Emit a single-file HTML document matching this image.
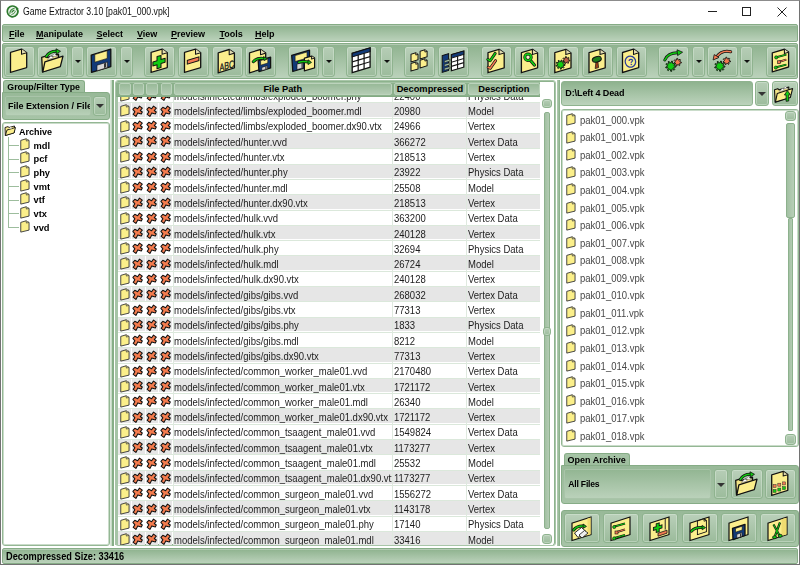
<!DOCTYPE html><html><head><meta charset="utf-8"><title>Game Extractor</title><style>
*{margin:0;padding:0;box-sizing:border-box}
html,body{width:800px;height:565px;overflow:hidden;background:#fff;font-family:"Liberation Sans",sans-serif;color:#000}
.a{position:absolute}
.pnl{position:absolute;border:1px solid #86ac86;border-radius:3px;background:linear-gradient(#8fb38f,#bdd4bd)}
.bar{position:absolute;border:1px solid #86ac86;border-radius:2px;background:linear-gradient(#8eb28e,#bbd2bb);box-shadow:inset 0 1px 0 #b3cbb3}
.btn{position:absolute;border:1px solid #8fb38f;border-radius:3px;background:linear-gradient(#bad0ba,#9bbb9b);box-shadow:inset 0 0 0 1px rgba(220,235,220,.45)}
.dd{position:absolute;border:1px solid #8fb38f;border-radius:3px;background:linear-gradient(#b6cdb6,#9cbc9c);box-shadow:inset 0 0 0 1px rgba(220,235,220,.45)}
.arr{position:absolute;width:0;height:0;border-left:3px solid transparent;border-right:3px solid transparent;border-top:3px solid #111}
.b{font-weight:bold}
.t{position:absolute;white-space:nowrap;font-size:9px;line-height:11px;filter:grayscale(1)}
.mi{position:absolute;font-weight:bold;font-size:9px;line-height:11px;white-space:nowrap;filter:grayscale(1)}
.mi u{text-decoration:underline;text-underline-offset:1px}
svg.i{position:absolute;overflow:visible}
.row{position:absolute;left:0;width:423px;height:15.29px}
.tt{position:absolute;white-space:nowrap;font-size:10.4px;line-height:12px;color:#1c1c1c;transform:scaleX(.915);transform-origin:0 0;filter:grayscale(1)}
.g{background:#e6e6e6}
</style></head><body>
<svg width="0" height="0" style="position:absolute">
<defs>
<symbol id="page" viewBox="0 0 20 26"><path d="M1.5,4.6 L12.4,1.3 L17.6,4.6 L17.6,19.3 L1.5,24.6 Z" fill="#fbee8c" stroke="#111" stroke-width="1.4" stroke-linejoin="round"/><path d="M12.4,1.3 L12.8,6.2 L17.6,4.6" fill="#ddd7a0" stroke="#111" stroke-width="1.1" stroke-linejoin="round"/></symbol>
<symbol id="spage" viewBox="0 -1 10 13"><path d="M0.75,1.4 L6.1,-0.2 L9.05,1.4 L9.05,9.1 L0.75,11.1 Z" fill="#fbef8a" stroke="#2a2a2a" stroke-width="0.85" stroke-linejoin="round"/><path d="M6.1,-0.2 L6.4,2.1 L9.05,1.4" fill="#d8d2a0" stroke="#2a2a2a" stroke-width="0.6"/></symbol>
<symbol id="xo" viewBox="-0.5 -0.5 11.5 12.5"><path d="M7,0.6 L9.8,2.7 L7.8,5 L9.8,6.5 L8.8,8.4 L5.3,7.4 L3.4,10.9 L0.7,8.9 L2.4,6.3 L0.4,3.8 L2.3,1.8 L5.1,3.2 Z" fill="#f47c4e" stroke="#111" stroke-width="1.05" stroke-linejoin="round"/></symbol>
<symbol id="ofold" viewBox="0 0 26 26"><path d="M4,11 L9,9.5 L10,11 L21,7.8 L21,20 L4.5,26 Z" fill="#f4e68a" stroke="#111" stroke-width="1.3" stroke-linejoin="round"/><path d="M9.5,13 L14,9.5 L17,12.5 Z M13,9 L16,7.6 L19,10 Z" fill="#fff" stroke="#555" stroke-width="0.6"/><path d="M7,16 L25,10 L22,21 L4.8,26 Z" fill="#fbee8c" stroke="#111" stroke-width="1.3" stroke-linejoin="round"/><path d="M8.5,9.5 Q12,4 19,5.5" fill="none" stroke="#111" stroke-width="2.6"/><path d="M8.5,9.5 Q12,4 19,5.5" fill="none" stroke="#11aa11" stroke-width="1.6"/><path d="M17.5,2.8 L22.5,5.3 L18,8 Z" fill="#11aa11" stroke="#111" stroke-width="0.8"/></symbol>
<symbol id="sfold" viewBox="0 0 12 11"><path d="M1,2.5 L4,1.6 L5,2.5 L10.5,1 L10.5,7.5 L1.3,10.5 Z" fill="#f4e68a" stroke="#111" stroke-width="0.9" stroke-linejoin="round"/><path d="M3,5 L11.5,2.5 L10,8 L1.3,10.5 Z" fill="#fbee8c" stroke="#111" stroke-width="0.9" stroke-linejoin="round"/><path d="M4.5,3.5 L7,2 L8,3.5 Z" fill="#fff"/></symbol>
<symbol id="floppy" viewBox="0 0 24 26"><path d="M2,8 L20,2 L21,21 L3,25 Z" fill="#1f4a8c" stroke="#111" stroke-width="1.3" stroke-linejoin="round"/><path d="M4.8,7.6 L16,4 L16,10.5 L4.8,14 Z" fill="#fbee8c" stroke="#111" stroke-width="0.7"/><path d="M7,17 L16,14.4 L16,20.5 L7,23 Z" fill="#c8c8c8" stroke="#111" stroke-width="0.7"/><path d="M13,15.5 L14.5,15 L14.5,20 L13,20.4 Z" fill="#333"/></symbol>
</defs></svg>
<div class="a" style="left:0;top:0;width:800px;height:565px;border:1px solid #727272;border-top-color:#8c8c8c"></div>
<svg class="i" style="left:6px;top:4px" width="14" height="14" viewBox="0 0 14 14"><ellipse cx="6.6" cy="7.4" rx="5.3" ry="5.4" transform="rotate(-30 6.6 7.4)" fill="#e9f2e9" stroke="#2e7a2e" stroke-width="1.7"/><path d="M3.8,9.8 Q3.9,5.2 8.6,4.2" fill="none" stroke="#3d8a3d" stroke-width="1.1"/><path d="M5.4,10.6 Q8.6,10.2 9.6,6.8" fill="none" stroke="#3d8a3d" stroke-width="0.9"/><path d="M5.6,8.6 Q6.6,6.6 8.4,6.2" fill="none" stroke="#2e7a2e" stroke-width="1.2"/><path d="M9.8,2.6 L12.6,4.6 L10.4,6.4 Z" fill="#2f7a2f"/></svg>
<div class="t" style="left:23.3px;top:6.3px;font-size:10px;color:#111;transform:scaleX(.87);transform-origin:0 0;">Game Extractor 3.10 [pak01_000.vpk]</div>
<div class="a" style="left:708px;top:11px;width:9px;height:1px;background:#222"></div>
<div class="a" style="left:742px;top:7px;width:9px;height:9px;border:1px solid #222"></div>
<svg class="i" style="left:777px;top:7px" width="10" height="10" viewBox="0 0 10 10"><path d="M0.5,0.5 L9.5,9.5 M9.5,0.5 L0.5,9.5" stroke="#222" stroke-width="1"/></svg>
<div class="bar" style="left:2px;top:24px;width:796px;height:18px;"></div>
<div class="mi" style="left:9px;top:28.5px"><u>F</u>ile</div>
<div class="mi" style="left:36px;top:28.5px"><u>M</u>anipulate</div>
<div class="mi" style="left:96.5px;top:28.5px"><u>S</u>elect</div>
<div class="mi" style="left:137px;top:28.5px"><u>V</u>iew</div>
<div class="mi" style="left:171px;top:28.5px"><u>P</u>review</div>
<div class="mi" style="left:219.5px;top:28.5px"><u>T</u>ools</div>
<div class="mi" style="left:255px;top:28.5px"><u>H</u>elp</div>
<div class="bar" style="left:2px;top:43px;width:796px;height:36px;"></div>
<div class="btn" style="left:4px;top:46px;width:31px;height:31px;"></div>
<svg class="i" style="left:4px;top:46px" width="31" height="31"><g transform="matrix(1 -0.3 0 1 0 1.950)"><path d="M6.5,6.4 H17.5 L22.7,11.600000000000001 V26.4 H6.5 Z" fill="#fbee8c" stroke="#111" stroke-width="1.3" stroke-linejoin="round"/><path d="M17.5,6.4 V11.600000000000001 H22.7" fill="#e4ddb0" stroke="#111" stroke-width="1.04" stroke-linejoin="round"/></g></svg>
<div class="btn" style="left:37px;top:46px;width:31px;height:31px;"></div>
<svg class="i" style="left:37px;top:46px" width="31" height="31"><g transform="translate(0 0) scale(1.0)"><path d="M4.7,11.4 L8.6,10.2 L10,11.6 L21.5,8.2 L21.5,20.5 L5.5,26 Z" fill="#f3e487" stroke="#111" stroke-width="1.3" stroke-linejoin="round"/><path d="M10.5,13.5 L14,9.8 L16.5,12 Z M14.5,10 L17.5,7.8 L20.5,10.5 Z" fill="#fff" stroke="#666" stroke-width="0.5"/><path d="M7.9,15.9 L26,10.1 L23.3,20.7 L5.8,26 Z" fill="#fbee8c" stroke="#111" stroke-width="1.3" stroke-linejoin="round"/><path d="M9.3,10.5 Q12.5,5.2 19.5,5.3" fill="none" stroke="#111" stroke-width="3" stroke-linecap="round"/><path d="M9.3,10.5 Q12.5,5.2 19.5,5.3" fill="none" stroke="#11cc11" stroke-width="1.6" stroke-linecap="round"/><polygon points="19,2.8 23.5,5.3 19.3,8" fill="#11cc11" stroke="#111" stroke-width="0.8" stroke-linejoin="round"/></g></svg>
<div class="dd" style="left:71px;top:46px;width:13px;height:31px;"></div>
<div class="arr" style="left:74.5px;top:60px"></div>
<div class="btn" style="left:86px;top:46px;width:31px;height:31px;"></div>
<svg class="i" style="left:86px;top:46px" width="31" height="31"><polygon points="5.2,9.1 24.8,3.1 24.8,20.6 5.5,26.4" fill="#123a78" stroke="#111" stroke-width="1.3" stroke-linejoin="round"/><polygon points="8.8,8.5 21.2,4.7 21.2,12.4 8.8,16.2" fill="#fbee8c" stroke="#111" stroke-width="0.6"/><polygon points="11,19.2 21.5,16 21.5,21.6 11,24.8" fill="#d6d6d6" stroke="#111" stroke-width="0.6"/><polygon points="18,17.4 20.2,16.7 20.2,21.2 18,21.9" fill="#333"/></svg>
<div class="dd" style="left:120px;top:46px;width:13px;height:31px;"></div>
<div class="arr" style="left:123.5px;top:60px"></div>
<div class="btn" style="left:144px;top:46px;width:31px;height:31px;"></div>
<svg class="i" style="left:144px;top:46px" width="31" height="31"><g transform="matrix(1 -0.3 0 1 0 2.130)"><path d="M7.1,6.4 H18.099999999999998 L23.299999999999997,11.600000000000001 V26.4 H7.1 Z" fill="#fbee8c" stroke="#111" stroke-width="1.3" stroke-linejoin="round"/><path d="M18.099999999999998,6.4 V11.600000000000001 H23.299999999999997" fill="#e4ddb0" stroke="#111" stroke-width="1.04" stroke-linejoin="round"/></g><g transform="matrix(1 -0.3 0 1 0 4.5)"><path d="M13,10 h4 v4.1 h4.1 v4 h-4.1 v4.1 h-4 v-4.1 h-4.1 v-4 h4.1 Z" fill="#11cc11" stroke="#111" stroke-width="1" stroke-linejoin="round"/></g></svg>
<div class="btn" style="left:178px;top:46px;width:31px;height:31px;"></div>
<svg class="i" style="left:178px;top:46px" width="31" height="31"><g transform="matrix(1 -0.3 0 1 0 1.950)"><path d="M6.5,6.4 H17.5 L22.7,11.600000000000001 V26.4 H6.5 Z" fill="#fbee8c" stroke="#111" stroke-width="1.3" stroke-linejoin="round"/><path d="M17.5,6.4 V11.600000000000001 H22.7" fill="#e4ddb0" stroke="#111" stroke-width="1.04" stroke-linejoin="round"/></g><g transform="matrix(1 -0.3 0 1 0 4.5)"><rect x="9.3" y="12.6" width="11.6" height="3.8" fill="#f27a52" stroke="#111" stroke-width="1"/></g></svg>
<div class="btn" style="left:212px;top:46px;width:31px;height:31px;"></div>
<svg class="i" style="left:212px;top:46px" width="31" height="31"><g transform="matrix(1 -0.3 0 1 0 1.860)"><path d="M6.2,6.800000000000001 H17.2 L22.4,12.0 V26.8 H6.2 Z" fill="#fbee8c" stroke="#111" stroke-width="1.3" stroke-linejoin="round"/><path d="M17.2,6.800000000000001 V12.0 H22.4" fill="#e4ddb0" stroke="#111" stroke-width="1.04" stroke-linejoin="round"/></g><g transform="matrix(1 -0.3 0 1 0 4.4)"><text x="7.6" y="23.4" font-family="Liberation Sans" font-size="10.5" textLength="14.5" lengthAdjust="spacingAndGlyphs" fill="#1a1a1a" stroke="#1a1a1a" stroke-width="0.35">ABC</text></g></svg>
<div class="btn" style="left:245px;top:46px;width:31px;height:31px;"></div>
<svg class="i" style="left:245px;top:46px" width="31" height="31"><g transform="matrix(1 -0.3 0 1 0 1.350)"><path d="M4.5,6.800000000000001 H15.5 L20.7,12.0 V26.8 H4.5 Z" fill="#fbee8c" stroke="#111" stroke-width="1.3" stroke-linejoin="round"/><path d="M15.5,6.800000000000001 V12.0 H20.7" fill="#e4ddb0" stroke="#111" stroke-width="1.04" stroke-linejoin="round"/></g><polygon points="13.2,14.9 25.6,11.1 25.6,21.9 14,25.6" fill="#123a78" stroke="#111" stroke-width="1.3" stroke-linejoin="round"/><polygon points="15.6,14.6 22.8,12.4 22.8,17 15.6,19.2" fill="#fbee8c" stroke="#111" stroke-width="0.6"/><polygon points="16.8,21.4 22.4,19.7 22.4,23 16.8,24.6" fill="#d6d6d6" stroke="#111" stroke-width="0.6"/><polygon points="20.3,20.6 21.5,20.2 21.5,22.9 20.3,23.3" fill="#333"/><path d="M8.3,15.7 Q12.5,11 19.5,12.6" fill="none" stroke="#111" stroke-width="3" stroke-linecap="round"/><path d="M8.3,15.7 Q12.5,11 19.5,12.6" fill="none" stroke="#11cc11" stroke-width="1.6" stroke-linecap="round"/><polygon points="18.5,10.6 22.5,12.8 19,14.6" fill="#11cc11" stroke="#111" stroke-width="0.8" stroke-linejoin="round"/></svg>
<div class="btn" style="left:288px;top:46px;width:31px;height:31px;"></div>
<svg class="i" style="left:288px;top:46px" width="31" height="31"><polygon points="3.7,9.3 21.5,4.2 21.5,20.5 4.8,25.5" fill="#123a78" stroke="#111" stroke-width="1.3" stroke-linejoin="round"/><polygon points="7.1,9.6 19,6 19,12.2 7.1,15.5" fill="#fbee8c" stroke="#111" stroke-width="0.6"/><polygon points="9,18.1 15,16.4 15,22 9,23.6" fill="#d6d6d6" stroke="#111" stroke-width="0.6"/><polygon points="13.5,17 14.6,16.7 14.6,21.8 13.5,22.1" fill="#333"/><g transform="matrix(1 -0.3 0 1 0 4.920)"><path d="M16.4,12.2 H23.599999999999998 L26.599999999999998,15.2 V24.9 H16.4 Z" fill="#fbee8c" stroke="#111" stroke-width="1.2" stroke-linejoin="round"/><path d="M23.599999999999998,12.2 V15.2 H26.599999999999998" fill="#e4ddb0" stroke="#111" stroke-width="0.96" stroke-linejoin="round"/></g><path d="M10.8,16.2 Q15,14.8 20.5,16" fill="none" stroke="#111" stroke-width="3" stroke-linecap="round"/><path d="M10.8,16.2 Q15,14.8 20.5,16" fill="none" stroke="#11cc11" stroke-width="1.6" stroke-linecap="round"/><polygon points="20,13.8 23.5,16.4 20,18.6" fill="#11cc11" stroke="#111" stroke-width="0.8" stroke-linejoin="round"/></svg>
<div class="dd" style="left:322px;top:46px;width:13px;height:31px;"></div>
<div class="arr" style="left:325.5px;top:60px"></div>
<div class="btn" style="left:346px;top:46px;width:31px;height:31px;"></div>
<svg class="i" style="left:346px;top:46px" width="31" height="31"><g transform="matrix(1 -0.3 0 1 0 1.86)"><rect x="6.2" y="7.3" width="17.9" height="19.3" fill="#fff" stroke="#111" stroke-width="1.3"/><rect x="6.2" y="7.3" width="17.9" height="3.6" fill="#123a78" stroke="#111" stroke-width="1"/><line x1="6.2" y1="15.9" x2="24.1" y2="15.9" stroke="#111" stroke-width="1.2"/><line x1="6.2" y1="21.1" x2="24.1" y2="21.1" stroke="#111" stroke-width="1.2"/><line x1="12.2" y1="10.9" x2="12.2" y2="26.6" stroke="#111" stroke-width="1.2"/><line x1="18.1" y1="10.9" x2="18.1" y2="26.6" stroke="#111" stroke-width="1.2"/></g></svg>
<div class="dd" style="left:380px;top:46px;width:13px;height:31px;"></div>
<div class="arr" style="left:383.5px;top:60px"></div>
<div class="btn" style="left:404px;top:46px;width:31px;height:31px;"></div>
<svg class="i" style="left:404px;top:46px" width="31" height="31"><g transform="matrix(1 -0.3 0 1 0 2.100)"><path d="M7,8.3 H11.8 L14,10.5 V15.9 H7 Z" fill="#fbee8c" stroke="#111" stroke-width="1.0" stroke-linejoin="round"/><path d="M11.8,8.3 V10.5 H14" fill="#e4ddb0" stroke="#111" stroke-width="0.80" stroke-linejoin="round"/></g><g transform="matrix(1 -0.3 0 1 0 4.830)"><path d="M16.1,5.3 H20.900000000000002 L23.1,7.5 V12.899999999999999 H16.1 Z" fill="#fbee8c" stroke="#111" stroke-width="1.0" stroke-linejoin="round"/><path d="M20.900000000000002,5.3 V7.5 H23.1" fill="#e4ddb0" stroke="#111" stroke-width="0.80" stroke-linejoin="round"/></g><g transform="matrix(1 -0.3 0 1 0 2.100)"><path d="M7,17.5 H11.8 L14,19.7 V25.1 H7 Z" fill="#fbee8c" stroke="#111" stroke-width="1.0" stroke-linejoin="round"/><path d="M11.8,17.5 V19.7 H14" fill="#e4ddb0" stroke="#111" stroke-width="0.80" stroke-linejoin="round"/></g><g transform="matrix(1 -0.3 0 1 0 4.830)"><path d="M16.1,14.3 H20.900000000000002 L23.1,16.5 V21.9 H16.1 Z" fill="#fbee8c" stroke="#111" stroke-width="1.0" stroke-linejoin="round"/><path d="M20.900000000000002,14.3 V16.5 H23.1" fill="#e4ddb0" stroke="#111" stroke-width="0.80" stroke-linejoin="round"/></g></svg>
<div class="btn" style="left:438px;top:46px;width:31px;height:31px;"></div>
<svg class="i" style="left:438px;top:46px" width="31" height="31"><g transform="matrix(1 -0.3 0 1 0 4)"><rect x="4.2" y="6.8" width="6.4" height="16.9" fill="#123a78" stroke="#111" stroke-width="1"/><rect x="6.4" y="12.6" width="5.6" height="2" fill="#a8c4a8" stroke="#111" stroke-width="0.5"/><rect x="6.4" y="16.4" width="5.6" height="2" fill="#a8c4a8" stroke="#111" stroke-width="0.5"/><rect x="6.4" y="20.2" width="5.6" height="2" fill="#a8c4a8" stroke="#111" stroke-width="0.5"/><rect x="13.4" y="8.7" width="12.4" height="16.1" fill="#fff" stroke="#111" stroke-width="1.2"/><rect x="13.4" y="8.7" width="12.4" height="3.4" fill="#123a78" stroke="#111" stroke-width="0.9"/><line x1="13.4" y1="16.2" x2="25.8" y2="16.2" stroke="#111" stroke-width="1.1"/><line x1="13.4" y1="20.4" x2="25.8" y2="20.4" stroke="#111" stroke-width="1.1"/><line x1="19.6" y1="12.1" x2="19.6" y2="24.8" stroke="#111" stroke-width="1.1"/></g></svg>
<div class="btn" style="left:481px;top:46px;width:31px;height:31px;"></div>
<svg class="i" style="left:481px;top:46px" width="31" height="31"><g transform="matrix(1 -0.3 0 1 0 2.100)"><path d="M7.0,6.7 H18.0 L23.2,11.9 V26.7 H7.0 Z" fill="#fbee8c" stroke="#111" stroke-width="1.3" stroke-linejoin="round"/><path d="M18.0,6.7 V11.9 H23.2" fill="#e4ddb0" stroke="#111" stroke-width="1.04" stroke-linejoin="round"/></g><polyline points="6.8,13.4 9.2,14.8 14.2,7.4" fill="none" stroke="#111" stroke-width="2.9" stroke-linejoin="round" stroke-linecap="round"/><polyline points="6.8,13.4 9.2,14.8 14.2,7.4" fill="none" stroke="#11cc11" stroke-width="1.6" stroke-linejoin="round" stroke-linecap="round"/><polyline points="7.2,21.3 9.2,22.3 14.6,14.6" fill="none" stroke="#111" stroke-width="2.9" stroke-linejoin="round" stroke-linecap="round"/><polyline points="7.2,21.3 9.2,22.3 14.6,14.6" fill="none" stroke="#f27a52" stroke-width="1.6" stroke-linejoin="round" stroke-linecap="round"/></svg>
<div class="btn" style="left:514px;top:46px;width:31px;height:31px;"></div>
<svg class="i" style="left:514px;top:46px" width="31" height="31"><g transform="matrix(1 -0.3 0 1 0 2.220)"><path d="M7.4,6.7 H18.400000000000002 L23.6,11.9 V26.7 H7.4 Z" fill="#fbee8c" stroke="#111" stroke-width="1.3" stroke-linejoin="round"/><path d="M18.400000000000002,6.7 V11.9 H23.6" fill="#e4ddb0" stroke="#111" stroke-width="1.04" stroke-linejoin="round"/></g><line x1="16.3" y1="14.2" x2="20.4" y2="19" stroke="#111" stroke-width="3.2" stroke-linecap="round"/><line x1="16.3" y1="14.2" x2="20.4" y2="19" stroke="#11cc11" stroke-width="1.8" stroke-linecap="round"/><circle cx="14" cy="11.3" r="3.2" fill="#f8f3c8" stroke="#111" stroke-width="3"/><circle cx="14" cy="11.3" r="3.2" fill="none" stroke="#11cc11" stroke-width="1.6"/></svg>
<div class="btn" style="left:548px;top:46px;width:31px;height:31px;"></div>
<svg class="i" style="left:548px;top:46px" width="31" height="31"><g transform="matrix(1 -0.3 0 1 0 2.040)"><path d="M6.8,6.7 H17.8 L23.0,11.9 V26.7 H6.8 Z" fill="#fbee8c" stroke="#111" stroke-width="1.3" stroke-linejoin="round"/><path d="M17.8,6.7 V11.9 H23.0" fill="#e4ddb0" stroke="#111" stroke-width="1.04" stroke-linejoin="round"/></g><polygon points="21.90,14.20 21.81,15.00 20.31,15.17 20.05,15.59 20.54,17.01 19.86,17.44 18.80,16.38 18.30,16.43 17.50,17.71 16.74,17.44 16.91,15.95 16.55,15.59 15.06,15.76 14.79,15.00 16.07,14.20 16.12,13.70 15.06,12.64 15.49,11.96 16.91,12.45 17.33,12.19 17.50,10.69 18.30,10.60 18.80,12.02 19.27,12.19 20.54,11.39 21.11,11.96 20.31,13.23 20.48,13.70" fill="#c0604a" stroke="#111" stroke-width="0.9" stroke-linejoin="round"/><polygon points="17.10,18.60 17.03,19.40 15.18,19.58 14.97,20.03 16.02,21.56 15.46,22.12 13.93,21.07 13.48,21.28 13.30,23.13 12.50,23.20 12.00,21.41 11.52,21.28 10.20,22.58 9.54,22.12 10.32,20.43 10.03,20.03 8.18,20.17 7.97,19.40 9.65,18.60 9.69,18.10 8.18,17.03 8.52,16.30 10.32,16.77 10.67,16.42 10.20,14.62 10.93,14.28 12.00,15.79 12.50,15.75 13.30,14.07 14.07,14.28 13.93,16.13 14.33,16.42 16.02,15.64 16.48,16.30 15.18,17.62 15.31,18.10" fill="#11cc11" stroke="#111" stroke-width="0.9" stroke-linejoin="round"/></svg>
<div class="btn" style="left:582px;top:46px;width:31px;height:31px;"></div>
<svg class="i" style="left:582px;top:46px" width="31" height="31"><g transform="matrix(1 -0.3 0 1 0 2.100)"><path d="M7.0,6.7 H18.0 L23.2,11.9 V26.7 H7.0 Z" fill="#fbee8c" stroke="#111" stroke-width="1.3" stroke-linejoin="round"/><path d="M18.0,6.7 V11.9 H23.2" fill="#e4ddb0" stroke="#111" stroke-width="1.04" stroke-linejoin="round"/></g><path d="M14,15.5 L15.8,15 L16.6,21.6 L13.2,22.6 Z" fill="#a0401a" stroke="#111" stroke-width="0.7"/><ellipse cx="14.8" cy="13.3" rx="4.6" ry="2.7" transform="rotate(-16 14.8 13.3)" fill="#1d7d1d" stroke="#111" stroke-width="1"/></svg>
<div class="btn" style="left:616px;top:46px;width:31px;height:31px;"></div>
<svg class="i" style="left:616px;top:46px" width="31" height="31"><g transform="matrix(1 -0.3 0 1 0 1.950)"><path d="M6.5,6.5 H17.5 L22.7,11.7 V26.5 H6.5 Z" fill="#fbee8c" stroke="#111" stroke-width="1.3" stroke-linejoin="round"/><path d="M17.5,6.5 V11.7 H22.7" fill="#e4ddb0" stroke="#111" stroke-width="1.04" stroke-linejoin="round"/></g><ellipse cx="14.4" cy="15.6" rx="5.2" ry="5.6" transform="rotate(-20 14.4 15.6)" fill="none" stroke="#2b3d9c" stroke-width="1.3"/><text x="12.2" y="19.3" font-family="Liberation Sans" font-weight="bold" font-size="9" fill="#2b3d9c" transform="rotate(-10 14 16)">?</text></svg>
<div class="btn" style="left:658px;top:46px;width:31px;height:31px;"></div>
<svg class="i" style="left:658px;top:46px" width="31" height="31"><path d="M6.8,14 Q10,6.8 19.5,6.8" fill="none" stroke="#111" stroke-width="3" stroke-linecap="round"/><path d="M6.8,14 Q10,6.8 19.5,6.8" fill="none" stroke="#11cc11" stroke-width="1.6" stroke-linecap="round"/><polygon points="19,3.8 24.6,6.2 19.6,9.6" fill="#11cc11" stroke="#111" stroke-width="0.8" stroke-linejoin="round"/><polygon points="23.40,16.20 23.30,17.05 21.72,17.22 21.44,17.67 21.97,19.17 21.25,19.62 20.12,18.50 19.60,18.56 18.75,19.90 17.95,19.62 18.13,18.04 17.76,17.67 16.18,17.85 15.90,17.05 17.24,16.20 17.30,15.68 16.18,14.55 16.63,13.83 18.13,14.36 18.58,14.08 18.75,12.50 19.60,12.40 20.12,13.90 20.62,14.08 21.97,13.23 22.57,13.83 21.72,15.18 21.90,15.68" fill="#f27a52" stroke="#111" stroke-width="0.9" stroke-linejoin="round"/><polygon points="18.00,20.20 17.92,21.10 15.83,21.30 15.59,21.81 16.78,23.54 16.14,24.18 14.41,22.99 13.90,23.23 13.70,25.32 12.80,25.40 12.24,23.38 11.70,23.23 10.20,24.70 9.46,24.18 10.33,22.27 10.01,21.81 7.91,21.98 7.68,21.10 9.58,20.20 9.62,19.64 7.91,18.42 8.30,17.60 10.33,18.13 10.73,17.73 10.20,15.70 11.02,15.31 12.24,17.02 12.80,16.98 13.70,15.08 14.58,15.31 14.41,17.41 14.87,17.73 16.78,16.86 17.30,17.60 15.83,19.10 15.98,19.64" fill="#11cc11" stroke="#111" stroke-width="0.9" stroke-linejoin="round"/></svg>
<div class="dd" style="left:692px;top:46px;width:13px;height:31px;"></div>
<div class="arr" style="left:695.5px;top:60px"></div>
<div class="btn" style="left:707px;top:46px;width:31px;height:31px;"></div>
<svg class="i" style="left:707px;top:46px" width="31" height="31"><path d="M23.7,5.8 Q15,3.6 9.5,11" fill="none" stroke="#111" stroke-width="3" stroke-linecap="round"/><path d="M23.7,5.8 Q15,3.6 9.5,11" fill="none" stroke="#f27a52" stroke-width="1.6" stroke-linecap="round"/><polygon points="6.1,14 7.2,8.6 12,11.4" fill="#f27a52" stroke="#111" stroke-width="0.8" stroke-linejoin="round"/><polygon points="23.50,15.00 23.40,15.85 21.82,16.02 21.54,16.47 22.07,17.97 21.35,18.42 20.22,17.30 19.70,17.36 18.85,18.70 18.05,18.42 18.23,16.84 17.86,16.47 16.28,16.65 16.00,15.85 17.34,15.00 17.40,14.48 16.28,13.35 16.73,12.63 18.23,13.16 18.68,12.88 18.85,11.30 19.70,11.20 20.22,12.70 20.72,12.88 22.07,12.03 22.67,12.63 21.82,13.98 22.00,14.48" fill="#f27a52" stroke="#111" stroke-width="0.9" stroke-linejoin="round"/><polygon points="18.00,20.20 17.92,21.10 15.83,21.30 15.59,21.81 16.78,23.54 16.14,24.18 14.41,22.99 13.90,23.23 13.70,25.32 12.80,25.40 12.24,23.38 11.70,23.23 10.20,24.70 9.46,24.18 10.33,22.27 10.01,21.81 7.91,21.98 7.68,21.10 9.58,20.20 9.62,19.64 7.91,18.42 8.30,17.60 10.33,18.13 10.73,17.73 10.20,15.70 11.02,15.31 12.24,17.02 12.80,16.98 13.70,15.08 14.58,15.31 14.41,17.41 14.87,17.73 16.78,16.86 17.30,17.60 15.83,19.10 15.98,19.64" fill="#11cc11" stroke="#111" stroke-width="0.9" stroke-linejoin="round"/></svg>
<div class="dd" style="left:740px;top:46px;width:13px;height:31px;"></div>
<div class="arr" style="left:743.5px;top:60px"></div>
<div class="btn" style="left:766px;top:46px;width:31px;height:31px;"></div>
<svg class="i" style="left:766px;top:46px" width="31" height="31"><g transform="matrix(1 -0.3 0 1 0 1.890)"><path d="M6.3,6.9 H18.400000000000002 L22.6,11.100000000000001 V25.9 H6.3 Z" fill="#fbee8c" stroke="#111" stroke-width="1.3" stroke-linejoin="round"/><path d="M18.400000000000002,6.9 V11.100000000000001 H22.6" fill="#e4ddb0" stroke="#111" stroke-width="1.04" stroke-linejoin="round"/></g><line x1="10.3" y1="11.3" x2="20.3" y2="8.6" stroke="#111" stroke-width="2"/><line x1="10.3" y1="11.3" x2="20.3" y2="8.6" stroke="#11cc11" stroke-width="1"/><line x1="13.3" y1="15.8" x2="20.3" y2="13.6" stroke="#111" stroke-width="2"/><line x1="13.3" y1="15.8" x2="20.3" y2="13.6" stroke="#f27a52" stroke-width="1"/><line x1="10.3" y1="21.3" x2="20.3" y2="18.6" stroke="#111" stroke-width="2"/><line x1="10.3" y1="21.3" x2="20.3" y2="18.6" stroke="#11cc11" stroke-width="1"/><circle cx="10.2" cy="11.4" r="1.6" fill="#11cc11" stroke="#111" stroke-width="0.6"/><rect x="11.6" y="14.8" width="2.8" height="2.8" fill="#f27a52" stroke="#111" stroke-width="0.6"/><circle cx="9.8" cy="21.6" r="1.6" fill="#11cc11" stroke="#111" stroke-width="0.6"/></svg>
<div class="a" style="left:3px;top:80px;width:82px;height:14px;border:1px solid #86ac86;border-bottom:none;border-radius:3px 3px 0 0;background:linear-gradient(#a6c4a6,#9cbc9c)"></div>
<div class="t" style="left:7.3px;top:81.8px;font-size:8.8px;font-weight:bold;color:#000;">Group/Filter Type</div>
<div class="pnl" style="left:2px;top:92px;width:108px;height:28px;border-radius:0 3px 3px 3px;background:linear-gradient(#98b998,#a7c4a7)"></div>
<div class="a" style="left:5px;top:95.5px;width:86px;height:20px;border:1px solid #a9c4a9;border-radius:2px;background:linear-gradient(#95b795,#b8d0b8);overflow:hidden"><div class="t b" style="left:2px;top:4px;font-size:9px">File Extension / File</div></div>
<div class="dd" style="left:93px;top:95.5px;width:14px;height:20px;"></div>
<div class="arr" style="left:96px;top:103.5px;border-left-width:4px;border-right-width:4px;border-top-width:4px;border-top-color:#333"></div>
<div class="a" style="left:2px;top:122px;width:108px;height:424px;border:1px solid #94b794;box-shadow:inset 0 0 0 1px #cadcca;border-radius:3px;background:#fff"></div>
<svg class="i" style="left:4px;top:124.5px" width="12" height="11"><use href="#sfold"/></svg>
<div class="t" style="left:19px;top:126.8px;font-size:9px;font-weight:bold;color:#000;">Archive</div>
<div class="a" style="left:8px;top:137px;width:1px;height:91px;background:#9dbd9d"></div>
<div class="a" style="left:8px;top:144.80px;width:10.5px;height:1px;background:#9dbd9d"></div>
<svg class="i" style="left:20px;top:137.5px" width="10" height="13"><use href="#spage"/></svg>
<div class="t" style="left:33.5px;top:140.60000000000002px;font-size:9.3px;font-weight:bold;color:#000;">mdl</div>
<div class="a" style="left:8px;top:158.50px;width:10.5px;height:1px;background:#9dbd9d"></div>
<svg class="i" style="left:20px;top:151.2px" width="10" height="13"><use href="#spage"/></svg>
<div class="t" style="left:33.5px;top:154.3px;font-size:9.3px;font-weight:bold;color:#000;">pcf</div>
<div class="a" style="left:8px;top:172.20px;width:10.5px;height:1px;background:#9dbd9d"></div>
<svg class="i" style="left:20px;top:164.9px" width="10" height="13"><use href="#spage"/></svg>
<div class="t" style="left:33.5px;top:168.00000000000003px;font-size:9.3px;font-weight:bold;color:#000;">phy</div>
<div class="a" style="left:8px;top:185.90px;width:10.5px;height:1px;background:#9dbd9d"></div>
<svg class="i" style="left:20px;top:178.6px" width="10" height="13"><use href="#spage"/></svg>
<div class="t" style="left:33.5px;top:181.70000000000002px;font-size:9.3px;font-weight:bold;color:#000;">vmt</div>
<div class="a" style="left:8px;top:199.60px;width:10.5px;height:1px;background:#9dbd9d"></div>
<svg class="i" style="left:20px;top:192.3px" width="10" height="13"><use href="#spage"/></svg>
<div class="t" style="left:33.5px;top:195.40000000000003px;font-size:9.3px;font-weight:bold;color:#000;">vtf</div>
<div class="a" style="left:8px;top:213.30px;width:10.5px;height:1px;background:#9dbd9d"></div>
<svg class="i" style="left:20px;top:206.0px" width="10" height="13"><use href="#spage"/></svg>
<div class="t" style="left:33.5px;top:209.10000000000002px;font-size:9.3px;font-weight:bold;color:#000;">vtx</div>
<div class="a" style="left:8px;top:227.00px;width:10.5px;height:1px;background:#9dbd9d"></div>
<svg class="i" style="left:20px;top:219.7px" width="10" height="13"><use href="#spage"/></svg>
<div class="t" style="left:33.5px;top:222.8px;font-size:9.3px;font-weight:bold;color:#000;">vvd</div>
<div class="a" style="left:110px;top:80px;width:2px;height:466px;background:linear-gradient(90deg,#e4eee4,#bcd3bc)"></div>
<div class="a" style="left:112px;top:80px;width:2px;height:466px;background:#86ae86"></div>
<div class="a" style="left:557px;top:80px;width:3px;height:466px;background:linear-gradient(90deg,#b5cdb5,#84ac84)"></div>
<div class="a" style="left:115px;top:80px;width:441px;height:466px;border:1px solid #a8c6a8;box-shadow:inset 0 0 0 1px #8db28d;border-radius:3px;background:#fff"></div>
<div class="a" style="left:117px;top:96px;width:423px;height:449px;overflow:hidden">
<div class="a" style="left:0;top:-8.90px;width:423px;height:15.3px">
<div class="a" style="left:0;top:0;width:423px;height:1px;background:#dbe8db"></div>
<svg class="i" style="left:2.5px;top:2.1px" width="10" height="13"><use href="#spage"/></svg>
<svg class="i" style="left:14.75px;top:2.35px" width="11.5" height="12.5"><use href="#xo"/></svg>
<svg class="i" style="left:28.7px;top:2.35px" width="11.5" height="12.5"><use href="#xo"/></svg>
<svg class="i" style="left:42.65px;top:2.35px" width="11.5" height="12.5"><use href="#xo"/></svg>
<div class="a" style="left:56px;top:0;width:219px;height:15px;overflow:hidden"><div class="tt" style="left:0.5px;top:3.8px">models/infected/limbs/exploded_boomer.phy</div></div>
<div class="tt" style="left:277.3px;top:3.8px">22400</div>
<div class="tt" style="left:351px;top:3.8px">Physics Data</div>
</div>
<div class="a" style="left:0;top:6.40px;width:423px;height:15.3px">
<div class="a" style="left:1px;top:0;width:13.2px;height:14.6px;background:#e6e6e6"></div>
<div class="a" style="left:15.2px;top:0;width:12.4px;height:14.6px;background:#e6e6e6"></div>
<div class="a" style="left:28.7px;top:0;width:12.4px;height:14.6px;background:#e6e6e6"></div>
<div class="a" style="left:42.2px;top:0;width:12.4px;height:14.6px;background:#e6e6e6"></div>
<div class="a" style="left:56px;top:0;width:219px;height:14.6px;background:#e6e6e6"></div>
<div class="a" style="left:276px;top:0;width:73px;height:14.6px;background:#e6e6e6"></div>
<div class="a" style="left:350px;top:0;width:73px;height:14.6px;background:#e6e6e6"></div>
<div class="a" style="left:0;top:0;width:423px;height:1px;background:#dbe8db"></div>
<svg class="i" style="left:2.5px;top:2.1px" width="10" height="13"><use href="#spage"/></svg>
<svg class="i" style="left:14.75px;top:2.35px" width="11.5" height="12.5"><use href="#xo"/></svg>
<svg class="i" style="left:28.7px;top:2.35px" width="11.5" height="12.5"><use href="#xo"/></svg>
<svg class="i" style="left:42.65px;top:2.35px" width="11.5" height="12.5"><use href="#xo"/></svg>
<div class="a" style="left:56px;top:0;width:219px;height:15px;overflow:hidden"><div class="tt" style="left:0.5px;top:3.8px">models/infected/limbs/exploded_boomer.mdl</div></div>
<div class="tt" style="left:277.3px;top:3.8px">20980</div>
<div class="tt" style="left:351px;top:3.8px">Model</div>
</div>
<div class="a" style="left:0;top:21.70px;width:423px;height:15.3px">
<div class="a" style="left:0;top:0;width:423px;height:1px;background:#dbe8db"></div>
<svg class="i" style="left:2.5px;top:2.1px" width="10" height="13"><use href="#spage"/></svg>
<svg class="i" style="left:14.75px;top:2.35px" width="11.5" height="12.5"><use href="#xo"/></svg>
<svg class="i" style="left:28.7px;top:2.35px" width="11.5" height="12.5"><use href="#xo"/></svg>
<svg class="i" style="left:42.65px;top:2.35px" width="11.5" height="12.5"><use href="#xo"/></svg>
<div class="a" style="left:56px;top:0;width:219px;height:15px;overflow:hidden"><div class="tt" style="left:0.5px;top:3.8px">models/infected/limbs/exploded_boomer.dx90.vtx</div></div>
<div class="tt" style="left:277.3px;top:3.8px">24966</div>
<div class="tt" style="left:351px;top:3.8px">Vertex</div>
</div>
<div class="a" style="left:0;top:37.00px;width:423px;height:15.3px">
<div class="a" style="left:1px;top:0;width:13.2px;height:14.6px;background:#e6e6e6"></div>
<div class="a" style="left:15.2px;top:0;width:12.4px;height:14.6px;background:#e6e6e6"></div>
<div class="a" style="left:28.7px;top:0;width:12.4px;height:14.6px;background:#e6e6e6"></div>
<div class="a" style="left:42.2px;top:0;width:12.4px;height:14.6px;background:#e6e6e6"></div>
<div class="a" style="left:56px;top:0;width:219px;height:14.6px;background:#e6e6e6"></div>
<div class="a" style="left:276px;top:0;width:73px;height:14.6px;background:#e6e6e6"></div>
<div class="a" style="left:350px;top:0;width:73px;height:14.6px;background:#e6e6e6"></div>
<div class="a" style="left:0;top:0;width:423px;height:1px;background:#dbe8db"></div>
<svg class="i" style="left:2.5px;top:2.1px" width="10" height="13"><use href="#spage"/></svg>
<svg class="i" style="left:14.75px;top:2.35px" width="11.5" height="12.5"><use href="#xo"/></svg>
<svg class="i" style="left:28.7px;top:2.35px" width="11.5" height="12.5"><use href="#xo"/></svg>
<svg class="i" style="left:42.65px;top:2.35px" width="11.5" height="12.5"><use href="#xo"/></svg>
<div class="a" style="left:56px;top:0;width:219px;height:15px;overflow:hidden"><div class="tt" style="left:0.5px;top:3.8px">models/infected/hunter.vvd</div></div>
<div class="tt" style="left:277.3px;top:3.8px">366272</div>
<div class="tt" style="left:351px;top:3.8px">Vertex Data</div>
</div>
<div class="a" style="left:0;top:52.30px;width:423px;height:15.3px">
<div class="a" style="left:0;top:0;width:423px;height:1px;background:#dbe8db"></div>
<svg class="i" style="left:2.5px;top:2.1px" width="10" height="13"><use href="#spage"/></svg>
<svg class="i" style="left:14.75px;top:2.35px" width="11.5" height="12.5"><use href="#xo"/></svg>
<svg class="i" style="left:28.7px;top:2.35px" width="11.5" height="12.5"><use href="#xo"/></svg>
<svg class="i" style="left:42.65px;top:2.35px" width="11.5" height="12.5"><use href="#xo"/></svg>
<div class="a" style="left:56px;top:0;width:219px;height:15px;overflow:hidden"><div class="tt" style="left:0.5px;top:3.8px">models/infected/hunter.vtx</div></div>
<div class="tt" style="left:277.3px;top:3.8px">218513</div>
<div class="tt" style="left:351px;top:3.8px">Vertex</div>
</div>
<div class="a" style="left:0;top:67.60px;width:423px;height:15.3px">
<div class="a" style="left:1px;top:0;width:13.2px;height:14.6px;background:#e6e6e6"></div>
<div class="a" style="left:15.2px;top:0;width:12.4px;height:14.6px;background:#e6e6e6"></div>
<div class="a" style="left:28.7px;top:0;width:12.4px;height:14.6px;background:#e6e6e6"></div>
<div class="a" style="left:42.2px;top:0;width:12.4px;height:14.6px;background:#e6e6e6"></div>
<div class="a" style="left:56px;top:0;width:219px;height:14.6px;background:#e6e6e6"></div>
<div class="a" style="left:276px;top:0;width:73px;height:14.6px;background:#e6e6e6"></div>
<div class="a" style="left:350px;top:0;width:73px;height:14.6px;background:#e6e6e6"></div>
<div class="a" style="left:0;top:0;width:423px;height:1px;background:#dbe8db"></div>
<svg class="i" style="left:2.5px;top:2.1px" width="10" height="13"><use href="#spage"/></svg>
<svg class="i" style="left:14.75px;top:2.35px" width="11.5" height="12.5"><use href="#xo"/></svg>
<svg class="i" style="left:28.7px;top:2.35px" width="11.5" height="12.5"><use href="#xo"/></svg>
<svg class="i" style="left:42.65px;top:2.35px" width="11.5" height="12.5"><use href="#xo"/></svg>
<div class="a" style="left:56px;top:0;width:219px;height:15px;overflow:hidden"><div class="tt" style="left:0.5px;top:3.8px">models/infected/hunter.phy</div></div>
<div class="tt" style="left:277.3px;top:3.8px">23922</div>
<div class="tt" style="left:351px;top:3.8px">Physics Data</div>
</div>
<div class="a" style="left:0;top:82.90px;width:423px;height:15.3px">
<div class="a" style="left:0;top:0;width:423px;height:1px;background:#dbe8db"></div>
<svg class="i" style="left:2.5px;top:2.1px" width="10" height="13"><use href="#spage"/></svg>
<svg class="i" style="left:14.75px;top:2.35px" width="11.5" height="12.5"><use href="#xo"/></svg>
<svg class="i" style="left:28.7px;top:2.35px" width="11.5" height="12.5"><use href="#xo"/></svg>
<svg class="i" style="left:42.65px;top:2.35px" width="11.5" height="12.5"><use href="#xo"/></svg>
<div class="a" style="left:56px;top:0;width:219px;height:15px;overflow:hidden"><div class="tt" style="left:0.5px;top:3.8px">models/infected/hunter.mdl</div></div>
<div class="tt" style="left:277.3px;top:3.8px">25508</div>
<div class="tt" style="left:351px;top:3.8px">Model</div>
</div>
<div class="a" style="left:0;top:98.20px;width:423px;height:15.3px">
<div class="a" style="left:1px;top:0;width:13.2px;height:14.6px;background:#e6e6e6"></div>
<div class="a" style="left:15.2px;top:0;width:12.4px;height:14.6px;background:#e6e6e6"></div>
<div class="a" style="left:28.7px;top:0;width:12.4px;height:14.6px;background:#e6e6e6"></div>
<div class="a" style="left:42.2px;top:0;width:12.4px;height:14.6px;background:#e6e6e6"></div>
<div class="a" style="left:56px;top:0;width:219px;height:14.6px;background:#e6e6e6"></div>
<div class="a" style="left:276px;top:0;width:73px;height:14.6px;background:#e6e6e6"></div>
<div class="a" style="left:350px;top:0;width:73px;height:14.6px;background:#e6e6e6"></div>
<div class="a" style="left:0;top:0;width:423px;height:1px;background:#dbe8db"></div>
<svg class="i" style="left:2.5px;top:2.1px" width="10" height="13"><use href="#spage"/></svg>
<svg class="i" style="left:14.75px;top:2.35px" width="11.5" height="12.5"><use href="#xo"/></svg>
<svg class="i" style="left:28.7px;top:2.35px" width="11.5" height="12.5"><use href="#xo"/></svg>
<svg class="i" style="left:42.65px;top:2.35px" width="11.5" height="12.5"><use href="#xo"/></svg>
<div class="a" style="left:56px;top:0;width:219px;height:15px;overflow:hidden"><div class="tt" style="left:0.5px;top:3.8px">models/infected/hunter.dx90.vtx</div></div>
<div class="tt" style="left:277.3px;top:3.8px">218513</div>
<div class="tt" style="left:351px;top:3.8px">Vertex</div>
</div>
<div class="a" style="left:0;top:113.50px;width:423px;height:15.3px">
<div class="a" style="left:0;top:0;width:423px;height:1px;background:#dbe8db"></div>
<svg class="i" style="left:2.5px;top:2.1px" width="10" height="13"><use href="#spage"/></svg>
<svg class="i" style="left:14.75px;top:2.35px" width="11.5" height="12.5"><use href="#xo"/></svg>
<svg class="i" style="left:28.7px;top:2.35px" width="11.5" height="12.5"><use href="#xo"/></svg>
<svg class="i" style="left:42.65px;top:2.35px" width="11.5" height="12.5"><use href="#xo"/></svg>
<div class="a" style="left:56px;top:0;width:219px;height:15px;overflow:hidden"><div class="tt" style="left:0.5px;top:3.8px">models/infected/hulk.vvd</div></div>
<div class="tt" style="left:277.3px;top:3.8px">363200</div>
<div class="tt" style="left:351px;top:3.8px">Vertex Data</div>
</div>
<div class="a" style="left:0;top:128.80px;width:423px;height:15.3px">
<div class="a" style="left:1px;top:0;width:13.2px;height:14.6px;background:#e6e6e6"></div>
<div class="a" style="left:15.2px;top:0;width:12.4px;height:14.6px;background:#e6e6e6"></div>
<div class="a" style="left:28.7px;top:0;width:12.4px;height:14.6px;background:#e6e6e6"></div>
<div class="a" style="left:42.2px;top:0;width:12.4px;height:14.6px;background:#e6e6e6"></div>
<div class="a" style="left:56px;top:0;width:219px;height:14.6px;background:#e6e6e6"></div>
<div class="a" style="left:276px;top:0;width:73px;height:14.6px;background:#e6e6e6"></div>
<div class="a" style="left:350px;top:0;width:73px;height:14.6px;background:#e6e6e6"></div>
<div class="a" style="left:0;top:0;width:423px;height:1px;background:#dbe8db"></div>
<svg class="i" style="left:2.5px;top:2.1px" width="10" height="13"><use href="#spage"/></svg>
<svg class="i" style="left:14.75px;top:2.35px" width="11.5" height="12.5"><use href="#xo"/></svg>
<svg class="i" style="left:28.7px;top:2.35px" width="11.5" height="12.5"><use href="#xo"/></svg>
<svg class="i" style="left:42.65px;top:2.35px" width="11.5" height="12.5"><use href="#xo"/></svg>
<div class="a" style="left:56px;top:0;width:219px;height:15px;overflow:hidden"><div class="tt" style="left:0.5px;top:3.8px">models/infected/hulk.vtx</div></div>
<div class="tt" style="left:277.3px;top:3.8px">240128</div>
<div class="tt" style="left:351px;top:3.8px">Vertex</div>
</div>
<div class="a" style="left:0;top:144.10px;width:423px;height:15.3px">
<div class="a" style="left:0;top:0;width:423px;height:1px;background:#dbe8db"></div>
<svg class="i" style="left:2.5px;top:2.1px" width="10" height="13"><use href="#spage"/></svg>
<svg class="i" style="left:14.75px;top:2.35px" width="11.5" height="12.5"><use href="#xo"/></svg>
<svg class="i" style="left:28.7px;top:2.35px" width="11.5" height="12.5"><use href="#xo"/></svg>
<svg class="i" style="left:42.65px;top:2.35px" width="11.5" height="12.5"><use href="#xo"/></svg>
<div class="a" style="left:56px;top:0;width:219px;height:15px;overflow:hidden"><div class="tt" style="left:0.5px;top:3.8px">models/infected/hulk.phy</div></div>
<div class="tt" style="left:277.3px;top:3.8px">32694</div>
<div class="tt" style="left:351px;top:3.8px">Physics Data</div>
</div>
<div class="a" style="left:0;top:159.40px;width:423px;height:15.3px">
<div class="a" style="left:1px;top:0;width:13.2px;height:14.6px;background:#e6e6e6"></div>
<div class="a" style="left:15.2px;top:0;width:12.4px;height:14.6px;background:#e6e6e6"></div>
<div class="a" style="left:28.7px;top:0;width:12.4px;height:14.6px;background:#e6e6e6"></div>
<div class="a" style="left:42.2px;top:0;width:12.4px;height:14.6px;background:#e6e6e6"></div>
<div class="a" style="left:56px;top:0;width:219px;height:14.6px;background:#e6e6e6"></div>
<div class="a" style="left:276px;top:0;width:73px;height:14.6px;background:#e6e6e6"></div>
<div class="a" style="left:350px;top:0;width:73px;height:14.6px;background:#e6e6e6"></div>
<div class="a" style="left:0;top:0;width:423px;height:1px;background:#dbe8db"></div>
<svg class="i" style="left:2.5px;top:2.1px" width="10" height="13"><use href="#spage"/></svg>
<svg class="i" style="left:14.75px;top:2.35px" width="11.5" height="12.5"><use href="#xo"/></svg>
<svg class="i" style="left:28.7px;top:2.35px" width="11.5" height="12.5"><use href="#xo"/></svg>
<svg class="i" style="left:42.65px;top:2.35px" width="11.5" height="12.5"><use href="#xo"/></svg>
<div class="a" style="left:56px;top:0;width:219px;height:15px;overflow:hidden"><div class="tt" style="left:0.5px;top:3.8px">models/infected/hulk.mdl</div></div>
<div class="tt" style="left:277.3px;top:3.8px">26724</div>
<div class="tt" style="left:351px;top:3.8px">Model</div>
</div>
<div class="a" style="left:0;top:174.70px;width:423px;height:15.3px">
<div class="a" style="left:0;top:0;width:423px;height:1px;background:#dbe8db"></div>
<svg class="i" style="left:2.5px;top:2.1px" width="10" height="13"><use href="#spage"/></svg>
<svg class="i" style="left:14.75px;top:2.35px" width="11.5" height="12.5"><use href="#xo"/></svg>
<svg class="i" style="left:28.7px;top:2.35px" width="11.5" height="12.5"><use href="#xo"/></svg>
<svg class="i" style="left:42.65px;top:2.35px" width="11.5" height="12.5"><use href="#xo"/></svg>
<div class="a" style="left:56px;top:0;width:219px;height:15px;overflow:hidden"><div class="tt" style="left:0.5px;top:3.8px">models/infected/hulk.dx90.vtx</div></div>
<div class="tt" style="left:277.3px;top:3.8px">240128</div>
<div class="tt" style="left:351px;top:3.8px">Vertex</div>
</div>
<div class="a" style="left:0;top:190.00px;width:423px;height:15.3px">
<div class="a" style="left:1px;top:0;width:13.2px;height:14.6px;background:#e6e6e6"></div>
<div class="a" style="left:15.2px;top:0;width:12.4px;height:14.6px;background:#e6e6e6"></div>
<div class="a" style="left:28.7px;top:0;width:12.4px;height:14.6px;background:#e6e6e6"></div>
<div class="a" style="left:42.2px;top:0;width:12.4px;height:14.6px;background:#e6e6e6"></div>
<div class="a" style="left:56px;top:0;width:219px;height:14.6px;background:#e6e6e6"></div>
<div class="a" style="left:276px;top:0;width:73px;height:14.6px;background:#e6e6e6"></div>
<div class="a" style="left:350px;top:0;width:73px;height:14.6px;background:#e6e6e6"></div>
<div class="a" style="left:0;top:0;width:423px;height:1px;background:#dbe8db"></div>
<svg class="i" style="left:2.5px;top:2.1px" width="10" height="13"><use href="#spage"/></svg>
<svg class="i" style="left:14.75px;top:2.35px" width="11.5" height="12.5"><use href="#xo"/></svg>
<svg class="i" style="left:28.7px;top:2.35px" width="11.5" height="12.5"><use href="#xo"/></svg>
<svg class="i" style="left:42.65px;top:2.35px" width="11.5" height="12.5"><use href="#xo"/></svg>
<div class="a" style="left:56px;top:0;width:219px;height:15px;overflow:hidden"><div class="tt" style="left:0.5px;top:3.8px">models/infected/gibs/gibs.vvd</div></div>
<div class="tt" style="left:277.3px;top:3.8px">268032</div>
<div class="tt" style="left:351px;top:3.8px">Vertex Data</div>
</div>
<div class="a" style="left:0;top:205.30px;width:423px;height:15.3px">
<div class="a" style="left:0;top:0;width:423px;height:1px;background:#dbe8db"></div>
<svg class="i" style="left:2.5px;top:2.1px" width="10" height="13"><use href="#spage"/></svg>
<svg class="i" style="left:14.75px;top:2.35px" width="11.5" height="12.5"><use href="#xo"/></svg>
<svg class="i" style="left:28.7px;top:2.35px" width="11.5" height="12.5"><use href="#xo"/></svg>
<svg class="i" style="left:42.65px;top:2.35px" width="11.5" height="12.5"><use href="#xo"/></svg>
<div class="a" style="left:56px;top:0;width:219px;height:15px;overflow:hidden"><div class="tt" style="left:0.5px;top:3.8px">models/infected/gibs/gibs.vtx</div></div>
<div class="tt" style="left:277.3px;top:3.8px">77313</div>
<div class="tt" style="left:351px;top:3.8px">Vertex</div>
</div>
<div class="a" style="left:0;top:220.60px;width:423px;height:15.3px">
<div class="a" style="left:1px;top:0;width:13.2px;height:14.6px;background:#e6e6e6"></div>
<div class="a" style="left:15.2px;top:0;width:12.4px;height:14.6px;background:#e6e6e6"></div>
<div class="a" style="left:28.7px;top:0;width:12.4px;height:14.6px;background:#e6e6e6"></div>
<div class="a" style="left:42.2px;top:0;width:12.4px;height:14.6px;background:#e6e6e6"></div>
<div class="a" style="left:56px;top:0;width:219px;height:14.6px;background:#e6e6e6"></div>
<div class="a" style="left:276px;top:0;width:73px;height:14.6px;background:#e6e6e6"></div>
<div class="a" style="left:350px;top:0;width:73px;height:14.6px;background:#e6e6e6"></div>
<div class="a" style="left:0;top:0;width:423px;height:1px;background:#dbe8db"></div>
<svg class="i" style="left:2.5px;top:2.1px" width="10" height="13"><use href="#spage"/></svg>
<svg class="i" style="left:14.75px;top:2.35px" width="11.5" height="12.5"><use href="#xo"/></svg>
<svg class="i" style="left:28.7px;top:2.35px" width="11.5" height="12.5"><use href="#xo"/></svg>
<svg class="i" style="left:42.65px;top:2.35px" width="11.5" height="12.5"><use href="#xo"/></svg>
<div class="a" style="left:56px;top:0;width:219px;height:15px;overflow:hidden"><div class="tt" style="left:0.5px;top:3.8px">models/infected/gibs/gibs.phy</div></div>
<div class="tt" style="left:277.3px;top:3.8px">1833</div>
<div class="tt" style="left:351px;top:3.8px">Physics Data</div>
</div>
<div class="a" style="left:0;top:235.90px;width:423px;height:15.3px">
<div class="a" style="left:0;top:0;width:423px;height:1px;background:#dbe8db"></div>
<svg class="i" style="left:2.5px;top:2.1px" width="10" height="13"><use href="#spage"/></svg>
<svg class="i" style="left:14.75px;top:2.35px" width="11.5" height="12.5"><use href="#xo"/></svg>
<svg class="i" style="left:28.7px;top:2.35px" width="11.5" height="12.5"><use href="#xo"/></svg>
<svg class="i" style="left:42.65px;top:2.35px" width="11.5" height="12.5"><use href="#xo"/></svg>
<div class="a" style="left:56px;top:0;width:219px;height:15px;overflow:hidden"><div class="tt" style="left:0.5px;top:3.8px">models/infected/gibs/gibs.mdl</div></div>
<div class="tt" style="left:277.3px;top:3.8px">8212</div>
<div class="tt" style="left:351px;top:3.8px">Model</div>
</div>
<div class="a" style="left:0;top:251.20px;width:423px;height:15.3px">
<div class="a" style="left:1px;top:0;width:13.2px;height:14.6px;background:#e6e6e6"></div>
<div class="a" style="left:15.2px;top:0;width:12.4px;height:14.6px;background:#e6e6e6"></div>
<div class="a" style="left:28.7px;top:0;width:12.4px;height:14.6px;background:#e6e6e6"></div>
<div class="a" style="left:42.2px;top:0;width:12.4px;height:14.6px;background:#e6e6e6"></div>
<div class="a" style="left:56px;top:0;width:219px;height:14.6px;background:#e6e6e6"></div>
<div class="a" style="left:276px;top:0;width:73px;height:14.6px;background:#e6e6e6"></div>
<div class="a" style="left:350px;top:0;width:73px;height:14.6px;background:#e6e6e6"></div>
<div class="a" style="left:0;top:0;width:423px;height:1px;background:#dbe8db"></div>
<svg class="i" style="left:2.5px;top:2.1px" width="10" height="13"><use href="#spage"/></svg>
<svg class="i" style="left:14.75px;top:2.35px" width="11.5" height="12.5"><use href="#xo"/></svg>
<svg class="i" style="left:28.7px;top:2.35px" width="11.5" height="12.5"><use href="#xo"/></svg>
<svg class="i" style="left:42.65px;top:2.35px" width="11.5" height="12.5"><use href="#xo"/></svg>
<div class="a" style="left:56px;top:0;width:219px;height:15px;overflow:hidden"><div class="tt" style="left:0.5px;top:3.8px">models/infected/gibs/gibs.dx90.vtx</div></div>
<div class="tt" style="left:277.3px;top:3.8px">77313</div>
<div class="tt" style="left:351px;top:3.8px">Vertex</div>
</div>
<div class="a" style="left:0;top:266.50px;width:423px;height:15.3px">
<div class="a" style="left:0;top:0;width:423px;height:1px;background:#dbe8db"></div>
<svg class="i" style="left:2.5px;top:2.1px" width="10" height="13"><use href="#spage"/></svg>
<svg class="i" style="left:14.75px;top:2.35px" width="11.5" height="12.5"><use href="#xo"/></svg>
<svg class="i" style="left:28.7px;top:2.35px" width="11.5" height="12.5"><use href="#xo"/></svg>
<svg class="i" style="left:42.65px;top:2.35px" width="11.5" height="12.5"><use href="#xo"/></svg>
<div class="a" style="left:56px;top:0;width:219px;height:15px;overflow:hidden"><div class="tt" style="left:0.5px;top:3.8px">models/infected/common_worker_male01.vvd</div></div>
<div class="tt" style="left:277.3px;top:3.8px">2170480</div>
<div class="tt" style="left:351px;top:3.8px">Vertex Data</div>
</div>
<div class="a" style="left:0;top:281.80px;width:423px;height:15.3px">
<div class="a" style="left:1px;top:0;width:13.2px;height:14.6px;background:#e6e6e6"></div>
<div class="a" style="left:15.2px;top:0;width:12.4px;height:14.6px;background:#e6e6e6"></div>
<div class="a" style="left:28.7px;top:0;width:12.4px;height:14.6px;background:#e6e6e6"></div>
<div class="a" style="left:42.2px;top:0;width:12.4px;height:14.6px;background:#e6e6e6"></div>
<div class="a" style="left:56px;top:0;width:219px;height:14.6px;background:#e6e6e6"></div>
<div class="a" style="left:276px;top:0;width:73px;height:14.6px;background:#e6e6e6"></div>
<div class="a" style="left:350px;top:0;width:73px;height:14.6px;background:#e6e6e6"></div>
<div class="a" style="left:0;top:0;width:423px;height:1px;background:#dbe8db"></div>
<svg class="i" style="left:2.5px;top:2.1px" width="10" height="13"><use href="#spage"/></svg>
<svg class="i" style="left:14.75px;top:2.35px" width="11.5" height="12.5"><use href="#xo"/></svg>
<svg class="i" style="left:28.7px;top:2.35px" width="11.5" height="12.5"><use href="#xo"/></svg>
<svg class="i" style="left:42.65px;top:2.35px" width="11.5" height="12.5"><use href="#xo"/></svg>
<div class="a" style="left:56px;top:0;width:219px;height:15px;overflow:hidden"><div class="tt" style="left:0.5px;top:3.8px">models/infected/common_worker_male01.vtx</div></div>
<div class="tt" style="left:277.3px;top:3.8px">1721172</div>
<div class="tt" style="left:351px;top:3.8px">Vertex</div>
</div>
<div class="a" style="left:0;top:297.10px;width:423px;height:15.3px">
<div class="a" style="left:0;top:0;width:423px;height:1px;background:#dbe8db"></div>
<svg class="i" style="left:2.5px;top:2.1px" width="10" height="13"><use href="#spage"/></svg>
<svg class="i" style="left:14.75px;top:2.35px" width="11.5" height="12.5"><use href="#xo"/></svg>
<svg class="i" style="left:28.7px;top:2.35px" width="11.5" height="12.5"><use href="#xo"/></svg>
<svg class="i" style="left:42.65px;top:2.35px" width="11.5" height="12.5"><use href="#xo"/></svg>
<div class="a" style="left:56px;top:0;width:219px;height:15px;overflow:hidden"><div class="tt" style="left:0.5px;top:3.8px">models/infected/common_worker_male01.mdl</div></div>
<div class="tt" style="left:277.3px;top:3.8px">26340</div>
<div class="tt" style="left:351px;top:3.8px">Model</div>
</div>
<div class="a" style="left:0;top:312.40px;width:423px;height:15.3px">
<div class="a" style="left:1px;top:0;width:13.2px;height:14.6px;background:#e6e6e6"></div>
<div class="a" style="left:15.2px;top:0;width:12.4px;height:14.6px;background:#e6e6e6"></div>
<div class="a" style="left:28.7px;top:0;width:12.4px;height:14.6px;background:#e6e6e6"></div>
<div class="a" style="left:42.2px;top:0;width:12.4px;height:14.6px;background:#e6e6e6"></div>
<div class="a" style="left:56px;top:0;width:219px;height:14.6px;background:#e6e6e6"></div>
<div class="a" style="left:276px;top:0;width:73px;height:14.6px;background:#e6e6e6"></div>
<div class="a" style="left:350px;top:0;width:73px;height:14.6px;background:#e6e6e6"></div>
<div class="a" style="left:0;top:0;width:423px;height:1px;background:#dbe8db"></div>
<svg class="i" style="left:2.5px;top:2.1px" width="10" height="13"><use href="#spage"/></svg>
<svg class="i" style="left:14.75px;top:2.35px" width="11.5" height="12.5"><use href="#xo"/></svg>
<svg class="i" style="left:28.7px;top:2.35px" width="11.5" height="12.5"><use href="#xo"/></svg>
<svg class="i" style="left:42.65px;top:2.35px" width="11.5" height="12.5"><use href="#xo"/></svg>
<div class="a" style="left:56px;top:0;width:219px;height:15px;overflow:hidden"><div class="tt" style="left:0.5px;top:3.8px">models/infected/common_worker_male01.dx90.vtx</div></div>
<div class="tt" style="left:277.3px;top:3.8px">1721172</div>
<div class="tt" style="left:351px;top:3.8px">Vertex</div>
</div>
<div class="a" style="left:0;top:327.70px;width:423px;height:15.3px">
<div class="a" style="left:0;top:0;width:423px;height:1px;background:#dbe8db"></div>
<svg class="i" style="left:2.5px;top:2.1px" width="10" height="13"><use href="#spage"/></svg>
<svg class="i" style="left:14.75px;top:2.35px" width="11.5" height="12.5"><use href="#xo"/></svg>
<svg class="i" style="left:28.7px;top:2.35px" width="11.5" height="12.5"><use href="#xo"/></svg>
<svg class="i" style="left:42.65px;top:2.35px" width="11.5" height="12.5"><use href="#xo"/></svg>
<div class="a" style="left:56px;top:0;width:219px;height:15px;overflow:hidden"><div class="tt" style="left:0.5px;top:3.8px">models/infected/common_tsaagent_male01.vvd</div></div>
<div class="tt" style="left:277.3px;top:3.8px">1549824</div>
<div class="tt" style="left:351px;top:3.8px">Vertex Data</div>
</div>
<div class="a" style="left:0;top:343.00px;width:423px;height:15.3px">
<div class="a" style="left:1px;top:0;width:13.2px;height:14.6px;background:#e6e6e6"></div>
<div class="a" style="left:15.2px;top:0;width:12.4px;height:14.6px;background:#e6e6e6"></div>
<div class="a" style="left:28.7px;top:0;width:12.4px;height:14.6px;background:#e6e6e6"></div>
<div class="a" style="left:42.2px;top:0;width:12.4px;height:14.6px;background:#e6e6e6"></div>
<div class="a" style="left:56px;top:0;width:219px;height:14.6px;background:#e6e6e6"></div>
<div class="a" style="left:276px;top:0;width:73px;height:14.6px;background:#e6e6e6"></div>
<div class="a" style="left:350px;top:0;width:73px;height:14.6px;background:#e6e6e6"></div>
<div class="a" style="left:0;top:0;width:423px;height:1px;background:#dbe8db"></div>
<svg class="i" style="left:2.5px;top:2.1px" width="10" height="13"><use href="#spage"/></svg>
<svg class="i" style="left:14.75px;top:2.35px" width="11.5" height="12.5"><use href="#xo"/></svg>
<svg class="i" style="left:28.7px;top:2.35px" width="11.5" height="12.5"><use href="#xo"/></svg>
<svg class="i" style="left:42.65px;top:2.35px" width="11.5" height="12.5"><use href="#xo"/></svg>
<div class="a" style="left:56px;top:0;width:219px;height:15px;overflow:hidden"><div class="tt" style="left:0.5px;top:3.8px">models/infected/common_tsaagent_male01.vtx</div></div>
<div class="tt" style="left:277.3px;top:3.8px">1173277</div>
<div class="tt" style="left:351px;top:3.8px">Vertex</div>
</div>
<div class="a" style="left:0;top:358.30px;width:423px;height:15.3px">
<div class="a" style="left:0;top:0;width:423px;height:1px;background:#dbe8db"></div>
<svg class="i" style="left:2.5px;top:2.1px" width="10" height="13"><use href="#spage"/></svg>
<svg class="i" style="left:14.75px;top:2.35px" width="11.5" height="12.5"><use href="#xo"/></svg>
<svg class="i" style="left:28.7px;top:2.35px" width="11.5" height="12.5"><use href="#xo"/></svg>
<svg class="i" style="left:42.65px;top:2.35px" width="11.5" height="12.5"><use href="#xo"/></svg>
<div class="a" style="left:56px;top:0;width:219px;height:15px;overflow:hidden"><div class="tt" style="left:0.5px;top:3.8px">models/infected/common_tsaagent_male01.mdl</div></div>
<div class="tt" style="left:277.3px;top:3.8px">25532</div>
<div class="tt" style="left:351px;top:3.8px">Model</div>
</div>
<div class="a" style="left:0;top:373.60px;width:423px;height:15.3px">
<div class="a" style="left:1px;top:0;width:13.2px;height:14.6px;background:#e6e6e6"></div>
<div class="a" style="left:15.2px;top:0;width:12.4px;height:14.6px;background:#e6e6e6"></div>
<div class="a" style="left:28.7px;top:0;width:12.4px;height:14.6px;background:#e6e6e6"></div>
<div class="a" style="left:42.2px;top:0;width:12.4px;height:14.6px;background:#e6e6e6"></div>
<div class="a" style="left:56px;top:0;width:219px;height:14.6px;background:#e6e6e6"></div>
<div class="a" style="left:276px;top:0;width:73px;height:14.6px;background:#e6e6e6"></div>
<div class="a" style="left:350px;top:0;width:73px;height:14.6px;background:#e6e6e6"></div>
<div class="a" style="left:0;top:0;width:423px;height:1px;background:#dbe8db"></div>
<svg class="i" style="left:2.5px;top:2.1px" width="10" height="13"><use href="#spage"/></svg>
<svg class="i" style="left:14.75px;top:2.35px" width="11.5" height="12.5"><use href="#xo"/></svg>
<svg class="i" style="left:28.7px;top:2.35px" width="11.5" height="12.5"><use href="#xo"/></svg>
<svg class="i" style="left:42.65px;top:2.35px" width="11.5" height="12.5"><use href="#xo"/></svg>
<div class="a" style="left:56px;top:0;width:219px;height:15px;overflow:hidden"><div class="tt" style="left:0.5px;top:3.8px">models/infected/common_tsaagent_male01.dx90.vtx</div></div>
<div class="tt" style="left:277.3px;top:3.8px">1173277</div>
<div class="tt" style="left:351px;top:3.8px">Vertex</div>
</div>
<div class="a" style="left:0;top:388.90px;width:423px;height:15.3px">
<div class="a" style="left:0;top:0;width:423px;height:1px;background:#dbe8db"></div>
<svg class="i" style="left:2.5px;top:2.1px" width="10" height="13"><use href="#spage"/></svg>
<svg class="i" style="left:14.75px;top:2.35px" width="11.5" height="12.5"><use href="#xo"/></svg>
<svg class="i" style="left:28.7px;top:2.35px" width="11.5" height="12.5"><use href="#xo"/></svg>
<svg class="i" style="left:42.65px;top:2.35px" width="11.5" height="12.5"><use href="#xo"/></svg>
<div class="a" style="left:56px;top:0;width:219px;height:15px;overflow:hidden"><div class="tt" style="left:0.5px;top:3.8px">models/infected/common_surgeon_male01.vvd</div></div>
<div class="tt" style="left:277.3px;top:3.8px">1556272</div>
<div class="tt" style="left:351px;top:3.8px">Vertex Data</div>
</div>
<div class="a" style="left:0;top:404.20px;width:423px;height:15.3px">
<div class="a" style="left:1px;top:0;width:13.2px;height:14.6px;background:#e6e6e6"></div>
<div class="a" style="left:15.2px;top:0;width:12.4px;height:14.6px;background:#e6e6e6"></div>
<div class="a" style="left:28.7px;top:0;width:12.4px;height:14.6px;background:#e6e6e6"></div>
<div class="a" style="left:42.2px;top:0;width:12.4px;height:14.6px;background:#e6e6e6"></div>
<div class="a" style="left:56px;top:0;width:219px;height:14.6px;background:#e6e6e6"></div>
<div class="a" style="left:276px;top:0;width:73px;height:14.6px;background:#e6e6e6"></div>
<div class="a" style="left:350px;top:0;width:73px;height:14.6px;background:#e6e6e6"></div>
<div class="a" style="left:0;top:0;width:423px;height:1px;background:#dbe8db"></div>
<svg class="i" style="left:2.5px;top:2.1px" width="10" height="13"><use href="#spage"/></svg>
<svg class="i" style="left:14.75px;top:2.35px" width="11.5" height="12.5"><use href="#xo"/></svg>
<svg class="i" style="left:28.7px;top:2.35px" width="11.5" height="12.5"><use href="#xo"/></svg>
<svg class="i" style="left:42.65px;top:2.35px" width="11.5" height="12.5"><use href="#xo"/></svg>
<div class="a" style="left:56px;top:0;width:219px;height:15px;overflow:hidden"><div class="tt" style="left:0.5px;top:3.8px">models/infected/common_surgeon_male01.vtx</div></div>
<div class="tt" style="left:277.3px;top:3.8px">1143178</div>
<div class="tt" style="left:351px;top:3.8px">Vertex</div>
</div>
<div class="a" style="left:0;top:419.50px;width:423px;height:15.3px">
<div class="a" style="left:0;top:0;width:423px;height:1px;background:#dbe8db"></div>
<svg class="i" style="left:2.5px;top:2.1px" width="10" height="13"><use href="#spage"/></svg>
<svg class="i" style="left:14.75px;top:2.35px" width="11.5" height="12.5"><use href="#xo"/></svg>
<svg class="i" style="left:28.7px;top:2.35px" width="11.5" height="12.5"><use href="#xo"/></svg>
<svg class="i" style="left:42.65px;top:2.35px" width="11.5" height="12.5"><use href="#xo"/></svg>
<div class="a" style="left:56px;top:0;width:219px;height:15px;overflow:hidden"><div class="tt" style="left:0.5px;top:3.8px">models/infected/common_surgeon_male01.phy</div></div>
<div class="tt" style="left:277.3px;top:3.8px">17140</div>
<div class="tt" style="left:351px;top:3.8px">Physics Data</div>
</div>
<div class="a" style="left:0;top:434.80px;width:423px;height:15.3px">
<div class="a" style="left:1px;top:0;width:13.2px;height:14.6px;background:#e6e6e6"></div>
<div class="a" style="left:15.2px;top:0;width:12.4px;height:14.6px;background:#e6e6e6"></div>
<div class="a" style="left:28.7px;top:0;width:12.4px;height:14.6px;background:#e6e6e6"></div>
<div class="a" style="left:42.2px;top:0;width:12.4px;height:14.6px;background:#e6e6e6"></div>
<div class="a" style="left:56px;top:0;width:219px;height:14.6px;background:#e6e6e6"></div>
<div class="a" style="left:276px;top:0;width:73px;height:14.6px;background:#e6e6e6"></div>
<div class="a" style="left:350px;top:0;width:73px;height:14.6px;background:#e6e6e6"></div>
<div class="a" style="left:0;top:0;width:423px;height:1px;background:#dbe8db"></div>
<svg class="i" style="left:2.5px;top:2.1px" width="10" height="13"><use href="#spage"/></svg>
<svg class="i" style="left:14.75px;top:2.35px" width="11.5" height="12.5"><use href="#xo"/></svg>
<svg class="i" style="left:28.7px;top:2.35px" width="11.5" height="12.5"><use href="#xo"/></svg>
<svg class="i" style="left:42.65px;top:2.35px" width="11.5" height="12.5"><use href="#xo"/></svg>
<div class="a" style="left:56px;top:0;width:219px;height:15px;overflow:hidden"><div class="tt" style="left:0.5px;top:3.8px">models/infected/common_surgeon_male01.mdl</div></div>
<div class="tt" style="left:277.3px;top:3.8px">33416</div>
<div class="tt" style="left:351px;top:3.8px">Model</div>
</div>
<div class="a" style="left:55.5px;top:0;width:1px;height:449px;background:#dfe9df"></div>
<div class="a" style="left:275.0px;top:0;width:1px;height:449px;background:#dfe9df"></div>
<div class="a" style="left:349.0px;top:0;width:1px;height:449px;background:#dfe9df"></div>
<div class="a" style="left:422.5px;top:0;width:1px;height:449px;background:#dfe9df"></div>
</div>
<div class="a" style="left:117px;top:81.5px;width:423px;height:15px;background:#8cb18c;border-top:1px solid #a2c2a2;border-bottom:1px solid #82aa82"></div>
<div class="a" style="left:119px;top:83px;width:11.5px;height:12.2px;border:1px solid #bcd3bc;border-radius:2px;background:linear-gradient(#98b998,#b4ccb4);font-weight:bold;font-size:9.3px;line-height:10px;text-align:center;white-space:nowrap"></div>
<div class="a" style="left:132.8px;top:83px;width:11.5px;height:12.2px;border:1px solid #bcd3bc;border-radius:2px;background:linear-gradient(#98b998,#b4ccb4);font-weight:bold;font-size:9.3px;line-height:10px;text-align:center;white-space:nowrap"></div>
<div class="a" style="left:146.3px;top:83px;width:11.5px;height:12.2px;border:1px solid #bcd3bc;border-radius:2px;background:linear-gradient(#98b998,#b4ccb4);font-weight:bold;font-size:9.3px;line-height:10px;text-align:center;white-space:nowrap"></div>
<div class="a" style="left:160.5px;top:83px;width:11px;height:12.2px;border:1px solid #bcd3bc;border-radius:2px;background:linear-gradient(#98b998,#b4ccb4);font-weight:bold;font-size:9.3px;line-height:10px;text-align:center;white-space:nowrap"></div>
<div class="a" style="left:174px;top:83px;width:217.5px;height:12.2px;border:1px solid #bcd3bc;border-radius:2px;background:linear-gradient(#98b998,#b4ccb4);font-weight:bold;font-size:9.3px;line-height:10px;text-align:center;white-space:nowrap">File Path</div>
<div class="a" style="left:394.4px;top:83px;width:71.2px;height:12.2px;border:1px solid #bcd3bc;border-radius:2px;background:linear-gradient(#98b998,#b4ccb4);font-weight:bold;font-size:9.3px;line-height:10px;text-align:center;white-space:nowrap">Decompressed</div>
<div class="a" style="left:468px;top:83px;width:71.7px;height:12.2px;border:1px solid #bcd3bc;border-radius:2px;background:linear-gradient(#98b998,#b4ccb4);font-weight:bold;font-size:9.3px;line-height:10px;text-align:center;white-space:nowrap">Description</div>
<div class="a" style="left:115px;top:97px;width:3px;height:448px;background:#a6c4a6"></div>
<div class="a" style="left:540px;top:96px;width:13px;height:449px;background:#fff"></div>
<div class="dd" style="left:541.5px;top:98.5px;width:10.5px;height:9.5px;"></div>
<div class="a" style="left:544px;top:111.5px;width:5.5px;height:417px;border:1px solid #8db18d;border-radius:2px;background:linear-gradient(90deg,#a2c0a2,#b3cbb3)"></div>
<div class="dd" style="left:543px;top:326.5px;width:8px;height:9.5px;"></div>
<div class="dd" style="left:541.5px;top:533.5px;width:10.5px;height:10px;"></div>
<div class="a" style="left:561px;top:80.5px;width:192px;height:25.5px;border:1px solid #8fb38f;border-radius:3px;background:linear-gradient(#8fb38f,#bcd3bc)"></div>
<div class="t" style="left:565.3px;top:88.3px;font-size:9px;font-weight:bold;color:#000;letter-spacing:-0.1px;">D:\Left 4 Dead</div>
<div class="dd" style="left:755px;top:80.5px;width:14px;height:25.5px;"></div>
<div class="arr" style="left:758px;top:92px;border-left-width:4px;border-right-width:4px;border-top-width:4px;border-top-color:#333"></div>
<div class="btn" style="left:772px;top:80.5px;width:26px;height:25.5px;"></div>
<svg class="i" style="left:772px;top:80.5px" width="26" height="26"><g transform="translate(-1.5 -1) scale(0.85)"><g transform="translate(0 0) scale(1.0)"><path d="M4.7,11.4 L8.6,10.2 L10,11.6 L21.5,8.2 L21.5,20.5 L5.5,26 Z" fill="#f3e487" stroke="#111" stroke-width="1.3" stroke-linejoin="round"/><path d="M10.5,13.5 L14,9.8 L16.5,12 Z M14.5,10 L17.5,7.8 L20.5,10.5 Z" fill="#fff" stroke="#666" stroke-width="0.5"/><path d="M7.9,15.9 L26,10.1 L23.3,20.7 L5.8,26 Z" fill="#fbee8c" stroke="#111" stroke-width="1.3" stroke-linejoin="round"/></g></g><path d="M15.4,9.6 L18.4,13.8 L16.7,13.8 L16.7,20 L14.1,20.3 L14.1,14 L12.4,14 Z" fill="#11cc11" stroke="#111" stroke-width="0.8" stroke-linejoin="round"/></svg>
<div class="a" style="left:561px;top:109px;width:237.5px;height:338px;border:1px solid #94b794;box-shadow:inset 0 0 0 1px #cadcca;border-radius:3px;background:#fff"></div>
<svg class="i" style="left:565.5px;top:113.0px" width="10" height="13"><use href="#spage"/></svg>
<div class="tt" style="left:579.5px;top:114.80px;color:#474747">pak01_000.vpk</div>
<svg class="i" style="left:565.5px;top:130.55px" width="10" height="13"><use href="#spage"/></svg>
<div class="tt" style="left:579.5px;top:132.35px;color:#474747">pak01_001.vpk</div>
<svg class="i" style="left:565.5px;top:148.1px" width="10" height="13"><use href="#spage"/></svg>
<div class="tt" style="left:579.5px;top:149.90px;color:#474747">pak01_002.vpk</div>
<svg class="i" style="left:565.5px;top:165.65px" width="10" height="13"><use href="#spage"/></svg>
<div class="tt" style="left:579.5px;top:167.45px;color:#474747">pak01_003.vpk</div>
<svg class="i" style="left:565.5px;top:183.20000000000002px" width="10" height="13"><use href="#spage"/></svg>
<div class="tt" style="left:579.5px;top:185.00px;color:#474747">pak01_004.vpk</div>
<svg class="i" style="left:565.5px;top:200.75px" width="10" height="13"><use href="#spage"/></svg>
<div class="tt" style="left:579.5px;top:202.55px;color:#474747">pak01_005.vpk</div>
<svg class="i" style="left:565.5px;top:218.3px" width="10" height="13"><use href="#spage"/></svg>
<div class="tt" style="left:579.5px;top:220.10px;color:#474747">pak01_006.vpk</div>
<svg class="i" style="left:565.5px;top:235.85px" width="10" height="13"><use href="#spage"/></svg>
<div class="tt" style="left:579.5px;top:237.65px;color:#474747">pak01_007.vpk</div>
<svg class="i" style="left:565.5px;top:253.4px" width="10" height="13"><use href="#spage"/></svg>
<div class="tt" style="left:579.5px;top:255.20px;color:#474747">pak01_008.vpk</div>
<svg class="i" style="left:565.5px;top:270.95px" width="10" height="13"><use href="#spage"/></svg>
<div class="tt" style="left:579.5px;top:272.75px;color:#474747">pak01_009.vpk</div>
<svg class="i" style="left:565.5px;top:288.5px" width="10" height="13"><use href="#spage"/></svg>
<div class="tt" style="left:579.5px;top:290.30px;color:#474747">pak01_010.vpk</div>
<svg class="i" style="left:565.5px;top:306.04999999999995px" width="10" height="13"><use href="#spage"/></svg>
<div class="tt" style="left:579.5px;top:307.85px;color:#474747">pak01_011.vpk</div>
<svg class="i" style="left:565.5px;top:323.6px" width="10" height="13"><use href="#spage"/></svg>
<div class="tt" style="left:579.5px;top:325.40px;color:#474747">pak01_012.vpk</div>
<svg class="i" style="left:565.5px;top:341.15px" width="10" height="13"><use href="#spage"/></svg>
<div class="tt" style="left:579.5px;top:342.95px;color:#474747">pak01_013.vpk</div>
<svg class="i" style="left:565.5px;top:358.7px" width="10" height="13"><use href="#spage"/></svg>
<div class="tt" style="left:579.5px;top:360.50px;color:#474747">pak01_014.vpk</div>
<svg class="i" style="left:565.5px;top:376.25px" width="10" height="13"><use href="#spage"/></svg>
<div class="tt" style="left:579.5px;top:378.05px;color:#474747">pak01_015.vpk</div>
<svg class="i" style="left:565.5px;top:393.79999999999995px" width="10" height="13"><use href="#spage"/></svg>
<div class="tt" style="left:579.5px;top:395.60px;color:#474747">pak01_016.vpk</div>
<svg class="i" style="left:565.5px;top:411.35px" width="10" height="13"><use href="#spage"/></svg>
<div class="tt" style="left:579.5px;top:413.15px;color:#474747">pak01_017.vpk</div>
<svg class="i" style="left:565.5px;top:428.9px" width="10" height="13"><use href="#spage"/></svg>
<div class="tt" style="left:579.5px;top:430.70px;color:#474747">pak01_018.vpk</div>
<div class="dd" style="left:785px;top:111.3px;width:11px;height:9.5px;"></div>
<div class="a" style="left:786px;top:123.4px;width:9px;height:95px;border:1px solid #8db18d;border-radius:2px;background:linear-gradient(90deg,#a2c0a2,#b8cfb8)"></div>
<div class="a" style="left:788px;top:218px;width:5px;height:212.6px;border:1px solid #8db18d;border-radius:1px;background:linear-gradient(90deg,#a2c0a2,#b3cbb3)"></div>
<div class="dd" style="left:785px;top:434.2px;width:11px;height:10.6px;"></div>
<div class="a" style="left:563.5px;top:453px;width:66px;height:13px;border:1px solid #86ac86;border-bottom:none;border-radius:3px 3px 0 0;background:linear-gradient(#a6c4a6,#9cbc9c)"></div>
<div class="t" style="left:567.5px;top:455px;font-size:9px;font-weight:bold;color:#000;">Open Archive</div>
<div class="pnl" style="left:561px;top:465px;width:237.5px;height:39px;border-radius:0 3px 3px 3px;background:linear-gradient(#98b998,#a7c4a7)"></div>
<div class="a" style="left:564px;top:469px;width:147px;height:30px;border:1px solid #a9c4a9;border-radius:2px;background:linear-gradient(#93b693,#bad1ba)"></div>
<div class="t" style="left:568.3px;top:479px;font-size:8.6px;font-weight:bold;color:#000;letter-spacing:-0.2px;">All Files</div>
<div class="dd" style="left:714px;top:469px;width:14px;height:30px;"></div>
<div class="arr" style="left:717px;top:482.5px;border-left-width:4px;border-right-width:4px;border-top-width:4px;border-top-color:#333"></div>
<div class="btn" style="left:731px;top:469px;width:31.5px;height:30px;"></div>
<svg class="i" style="left:731px;top:469px" width="31" height="30"><g transform="translate(0 0) scale(1.0)"><path d="M4.7,11.4 L8.6,10.2 L10,11.6 L21.5,8.2 L21.5,20.5 L5.5,26 Z" fill="#f3e487" stroke="#111" stroke-width="1.3" stroke-linejoin="round"/><path d="M10.5,13.5 L14,9.8 L16.5,12 Z M14.5,10 L17.5,7.8 L20.5,10.5 Z" fill="#fff" stroke="#666" stroke-width="0.5"/><path d="M7.9,15.9 L26,10.1 L23.3,20.7 L5.8,26 Z" fill="#fbee8c" stroke="#111" stroke-width="1.3" stroke-linejoin="round"/><path d="M9.3,10.5 Q12.5,5.2 19.5,5.3" fill="none" stroke="#111" stroke-width="3" stroke-linecap="round"/><path d="M9.3,10.5 Q12.5,5.2 19.5,5.3" fill="none" stroke="#11cc11" stroke-width="1.6" stroke-linecap="round"/><polygon points="19,2.8 23.5,5.3 19.3,8" fill="#11cc11" stroke="#111" stroke-width="0.8" stroke-linejoin="round"/></g></svg>
<div class="btn" style="left:765px;top:469px;width:31px;height:30px;"></div>
<svg class="i" style="left:765px;top:469px" width="31" height="30"><g transform="matrix(1 -0.3 0 1 0 2.010)"><path d="M6.7,5.9 H18.200000000000003 L22.8,10.5 V26.299999999999997 H6.7 Z" fill="#fbee8c" stroke="#111" stroke-width="1.3" stroke-linejoin="round"/><path d="M18.200000000000003,5.9 V10.5 H22.8" fill="#e4ddb0" stroke="#111" stroke-width="1.04" stroke-linejoin="round"/></g><rect x="8.1" y="15.5" width="3" height="3" fill="#f27a52" stroke="#333" stroke-width="0.5"/><rect x="8.1" y="20.5" width="3" height="3" fill="#11cc11" stroke="#333" stroke-width="0.5"/><rect x="12.8" y="14.2" width="3" height="3" fill="#f27a52" stroke="#333" stroke-width="0.5"/><rect x="12.8" y="19.05" width="3" height="3" fill="#11cc11" stroke="#333" stroke-width="0.5"/><rect x="17.5" y="12.9" width="3" height="3" fill="#f27a52" stroke="#333" stroke-width="0.5"/><rect x="17.5" y="17.6" width="3" height="3" fill="#11cc11" stroke="#333" stroke-width="0.5"/></svg>
<div class="pnl" style="left:561px;top:509.5px;width:237.5px;height:37px;background:linear-gradient(#98b998,#a7c4a7)"></div>
<div class="btn" style="left:564.2px;top:512.8px;width:36px;height:30.6px;"></div>
<svg class="i" style="left:564.2px;top:512.8px" width="36" height="31"><g transform="matrix(1 -0.3158 0 1 0 0)"><rect x="8" y="12.6" width="19" height="17.5" fill="#fbee8c" stroke="#111" stroke-width="1.2"/></g><g transform="matrix(1 -0.3158 0 1 0 0)"><rect x="23.5" y="13" width="3.2" height="16.8" fill="#f0dc70"/></g><polygon points="10.5,20 17.5,14.5 21.5,18 14,24.5" fill="#fff" stroke="#111" stroke-width="0.9"/><polygon points="15,22 20.5,17.5 24,20 18,25" fill="#eee" stroke="#111" stroke-width="0.8"/><path d="M9.6,17 Q13,12.5 19.5,13" fill="none" stroke="#111" stroke-width="3" stroke-linecap="round"/><path d="M9.6,17 Q13,12.5 19.5,13" fill="none" stroke="#11cc11" stroke-width="1.6" stroke-linecap="round"/><polygon points="19,11 22.5,13.4 19.3,15.3" fill="#11cc11" stroke="#111" stroke-width="0.8" stroke-linejoin="round"/></svg>
<div class="btn" style="left:603.3px;top:512.8px;width:36px;height:30.6px;"></div>
<svg class="i" style="left:603.3px;top:512.8px" width="36" height="31"><g transform="matrix(1 -0.3158 0 1 0 0)"><rect x="8" y="12.6" width="19" height="17.5" fill="#fbee8c" stroke="#111" stroke-width="1.2"/></g><line x1="11.5" y1="13.5" x2="22" y2="10.5" stroke="#111" stroke-width="2"/><line x1="11.5" y1="13.5" x2="22" y2="10.5" stroke="#11cc11" stroke-width="1"/><line x1="14" y1="19" x2="22" y2="16.5" stroke="#111" stroke-width="2"/><line x1="14" y1="19" x2="22" y2="16.5" stroke="#f27a52" stroke-width="1"/><line x1="11.5" y1="25" x2="22" y2="22" stroke="#111" stroke-width="2"/><line x1="11.5" y1="25" x2="22" y2="22" stroke="#11cc11" stroke-width="1"/><circle cx="11.2" cy="14" r="1.6" fill="#11cc11" stroke="#111" stroke-width="0.6"/><rect x="12" y="18" width="3" height="3" fill="#f27a52" stroke="#111" stroke-width="0.6"/><circle cx="11.2" cy="25.4" r="1.6" fill="#11cc11" stroke="#111" stroke-width="0.6"/></svg>
<div class="btn" style="left:642.4px;top:512.8px;width:36px;height:30.6px;"></div>
<svg class="i" style="left:642.4px;top:512.8px" width="36" height="31"><g transform="matrix(1 -0.3158 0 1 0 0)"><rect x="8" y="12.6" width="19" height="17.5" fill="#fbee8c" stroke="#111" stroke-width="1.2"/></g><g transform="matrix(1 -0.3158 0 1 0 0)"><line x1="23.2" y1="12.6" x2="23.2" y2="24" stroke="#111" stroke-width="0.9"/></g><path d="M11.4,13.6 h2.8 v-2.9 h3 v2.9 h2.8 v3 h-2.8 v2.9 h-3 v-2.9 h-2.8 Z" fill="#11cc11" stroke="#111" stroke-width="0.9" transform="matrix(1 -0.3 0 1 0 4.3)"/><polygon points="16,20.2 25,17.2 25,20.2 16,23.2" fill="#f27a52" stroke="#111" stroke-width="0.8"/></svg>
<div class="btn" style="left:681.5px;top:512.8px;width:36px;height:30.6px;"></div>
<svg class="i" style="left:681.5px;top:512.8px" width="36" height="31"><g transform="matrix(1 -0.3158 0 1 0 0)"><rect x="8" y="12.6" width="19" height="17.5" fill="#fbee8c" stroke="#111" stroke-width="1.2"/></g><g transform="matrix(1 -0.3158 0 1 0 0)"><path d="M15.4,12.8 H22 L24.4,15.2 V26.5 H15.4 Z" fill="#fbee8c" stroke="#111" stroke-width="0.9"/><path d="M22,12.8 V15.2 H24.4" fill="none" stroke="#111" stroke-width="0.7"/></g><path d="M9.4,18.2 Q13.5,13.8 20.5,14.6" fill="none" stroke="#111" stroke-width="3" stroke-linecap="round"/><path d="M9.4,18.2 Q13.5,13.8 20.5,14.6" fill="none" stroke="#11cc11" stroke-width="1.6" stroke-linecap="round"/><polygon points="20,12.4 23.6,14.6 20.2,16.8" fill="#11cc11" stroke="#111" stroke-width="0.8" stroke-linejoin="round"/></svg>
<div class="btn" style="left:720.6px;top:512.8px;width:36px;height:30.6px;"></div>
<svg class="i" style="left:720.6px;top:512.8px" width="36" height="31"><g transform="matrix(1 -0.3158 0 1 0 0)"><rect x="8" y="12.6" width="19" height="17.5" fill="#fbee8c" stroke="#111" stroke-width="1.2"/></g><polygon points="11.5,15.3 24,11.3 24,22.5 12,26.6" fill="#123a78" stroke="#111" stroke-width="1.3" stroke-linejoin="round"/><polygon points="14.5,15.4 21.2,13.2 21.2,17 14.5,19.2" fill="#fbee8c" stroke="#111" stroke-width="0.6"/><polygon points="15.8,21.3 21,19.6 21,23.4 15.8,25.1" fill="#d6d6d6" stroke="#111" stroke-width="0.6"/><polygon points="19,20.6 20.2,20.2 20.2,23.5 19,23.9" fill="#333"/></svg>
<div class="btn" style="left:759.7px;top:512.8px;width:36px;height:30.6px;"></div>
<svg class="i" style="left:759.7px;top:512.8px" width="36" height="31"><g transform="matrix(1 -0.3158 0 1 0 0)"><rect x="8" y="12.6" width="19" height="17.5" fill="#fbee8c" stroke="#111" stroke-width="1.2"/></g><g transform="matrix(1 -0.3158 0 1 0 0)"><rect x="21.5" y="13" width="5" height="16.8" fill="#f0dc70"/></g><path d="M13.5,11.5 L19.5,22.5 M20,9.5 L15,23" stroke="#111" stroke-width="2.2"/><path d="M13.5,11.5 L19.5,22.5 M20,9.5 L15,23" stroke="#11cc11" stroke-width="1"/><ellipse cx="14.6" cy="24.2" rx="2" ry="1.5" fill="#11cc11" stroke="#111" stroke-width="0.8"/><ellipse cx="20.2" cy="22.8" rx="2" ry="1.5" fill="#11cc11" stroke="#111" stroke-width="0.8"/></svg>
<div class="bar" style="left:2px;top:548px;width:796px;height:15.5px;"></div>
<div class="t" style="left:6.3px;top:550.6px;font-size:10px;font-weight:bold;color:#000;transform:scaleX(.92);transform-origin:0 0;">Decompressed Size: 33416</div>
</body></html>
